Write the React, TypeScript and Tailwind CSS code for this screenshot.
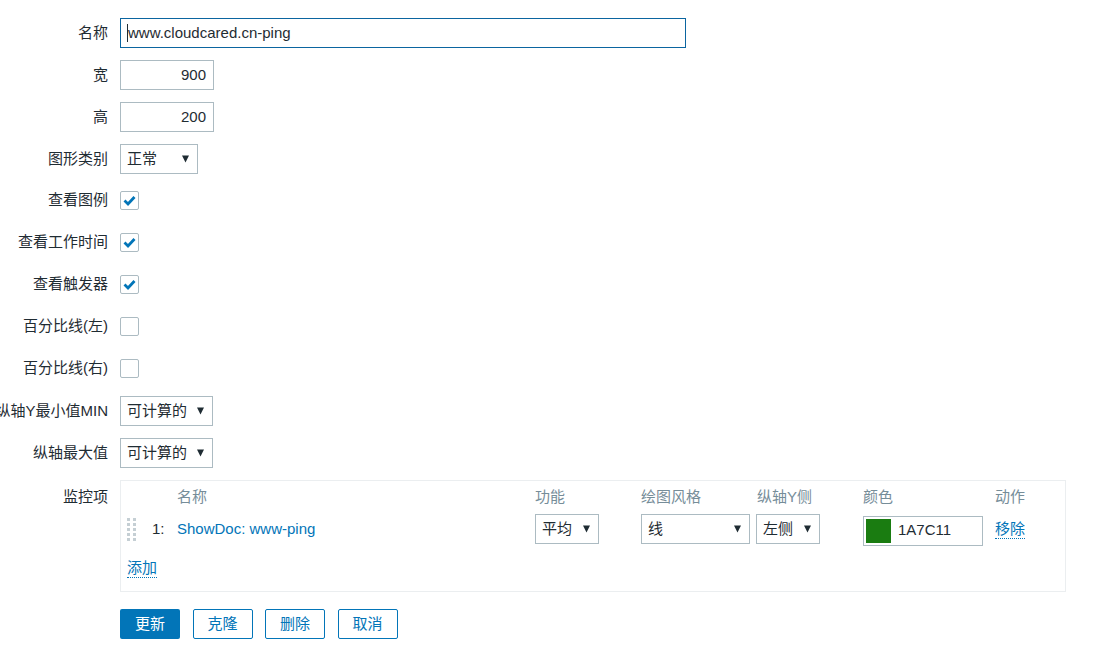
import React from 'react'

const font = { fontFamily: '"Liberation Sans", "Noto Sans CJK SC", sans-serif' }

function Label({ text }: { text: string }) {
  return (
    <div className="w-[108px] shrink-0 flex justify-end whitespace-nowrap text-[#1f2c33]">
      <span>{text}</span>
    </div>
  )
}

function Select({ value, width }: { value: string; width: string }) {
  return (
    <div
      className={`${width} h-[30px] border border-[#acbbc2] bg-white flex items-center justify-between pl-[6px] pr-[8px] text-[#1f2c33]`}
    >
      <span>{value}</span>
      <svg width="7" height="8" viewBox="0 0 7 8">
        <path d="M0 0.5 H7 L3.5 7.5 Z" fill="#1f2c33" />
      </svg>
    </div>
  )
}

function Check({ checked }: { checked: boolean }) {
  return (
    <div className="w-[19px] h-[19px] border border-[#acbbc2] rounded-[2px] bg-white flex items-center justify-center">
      {checked && (
        <svg width="13" height="11" viewBox="0 0 13 11">
          <path d="M1.5 5.5 L5 9 L11.5 2" fill="none" stroke="#0275b8" strokeWidth="2.8" />
        </svg>
      )}
    </div>
  )
}

function Row({ label, children }: { label: string; children: React.ReactNode }) {
  return (
    <div className="flex items-center h-[30px] gap-[12px]">
      <Label text={label} />
      {children}
    </div>
  )
}

function DragHandle() {
  const dots = []
  for (let r = 0; r < 5; r++) {
    for (let c = 0; c < 2; c++) {
      dots.push(<rect key={`${r}-${c}`} x={c * 6} y={r * 5} width="3" height="3" fill="#c5cfd4" />)
    }
  }
  return (
    <svg width="9" height="23" viewBox="0 0 9 23">
      {dots}
    </svg>
  )
}

export default function App() {
  return (
    <div className="w-[1106px] h-[657px] bg-white text-[15px] overflow-hidden" style={font}>
      <div className="pt-[18px] flex flex-col gap-[12px]">
        <Row label="名称">
          <div className="w-[566px] h-[30px] border border-[#0b65a0] flex items-center pl-[6px] text-[#1f2c33]">
            <span className="w-[1px] h-[18px] bg-[#1f2c33]"></span>
            www.cloudcared.cn-ping
          </div>
        </Row>
        <Row label="宽">
          <div className="w-[94px] h-[30px] border border-[#acbbc2] flex items-center justify-end pr-[7px] text-[#1f2c33]">900</div>
        </Row>
        <Row label="高">
          <div className="w-[94px] h-[30px] border border-[#acbbc2] flex items-center justify-end pr-[7px] text-[#1f2c33]">200</div>
        </Row>
        <Row label="图形类别">
          <Select value="正常" width="w-[78px]" />
        </Row>
        <div className="flex flex-col gap-[12px] -mt-[1px] mb-[1px]">
          <Row label="查看图例">
            <Check checked />
          </Row>
          <Row label="查看工作时间">
            <Check checked />
          </Row>
          <Row label="查看触发器">
            <Check checked />
          </Row>
          <Row label="百分比线(左)">
            <Check checked={false} />
          </Row>
          <Row label="百分比线(右)">
            <Check checked={false} />
          </Row>
        </div>
        <Row label="纵轴Y最小值MIN">
          <Select value="可计算的" width="w-[93px]" />
        </Row>
        <Row label="纵轴最大值">
          <Select value="可计算的" width="w-[93px]" />
        </Row>

        {/* 监控项 */}
        <div className="flex gap-[12px]">
          <div className="pt-[6px]">
            <Label text="监控项" />
          </div>
          <div className="w-[946px] h-[112px] border border-[#ebeef0] pl-[6px] pt-[6px]">
            <div className="flex items-center h-[20px] text-[#768d99]">
              <div className="w-[50px]"></div>
              <div className="w-[358px]">名称</div>
              <div className="w-[106px]">功能</div>
              <div className="w-[116px]">绘图风格</div>
              <div className="w-[106px]">纵轴Y侧</div>
              <div className="w-[132px]">颜色</div>
              <div>动作</div>
            </div>
            <div className="flex items-center h-[30px] mt-[7px]">
              <div className="w-[25px] flex items-center">
                <DragHandle />
              </div>
              <div className="w-[25px] text-[#1f2c33]">1:</div>
              <div className="w-[358px] text-[#0275b8]">ShowDoc: www-ping</div>
              <div className="w-[106px]">
                <Select value="平均" width="w-[64px]" />
              </div>
              <div className="w-[115px]">
                <Select value="线" width="w-[109px]" />
              </div>
              <div className="w-[107px]">
                <Select value="左侧" width="w-[64px]" />
              </div>
              <div className="w-[132px] pt-[3px]">
                <div className="w-[120px] h-[30px] border border-[#acbbc2] flex items-center pl-[2px] text-[#1f2c33]">
                  <div className="w-[25px] h-[24px] bg-[#1A7C11]"></div>
                  <span className="ml-[7px]">1A7C11</span>
                </div>
              </div>
              <div>
                <span className="text-[#0275b8] border-b border-dotted border-[#0275b8] pb-[1px]">移除</span>
              </div>
            </div>
            <div className="mt-[13px]">
              <span className="text-[#0275b8] border-b border-dotted border-[#0275b8] pb-[1px]">添加</span>
            </div>
          </div>
        </div>

        {/* buttons */}
        <div className="flex gap-[12.5px] pl-[120px] mt-[5px]">
          <div className="w-[60px] h-[30px] rounded-[2px] bg-[#0275b8] text-white flex items-center justify-center">更新</div>
          <div className="w-[60px] h-[30px] rounded-[2px] border border-[#0275b8] text-[#0275b8] flex items-center justify-center">克隆</div>
          <div className="w-[60px] h-[30px] rounded-[2px] border border-[#0275b8] text-[#0275b8] flex items-center justify-center">删除</div>
          <div className="w-[60px] h-[30px] rounded-[2px] border border-[#0275b8] text-[#0275b8] flex items-center justify-center">取消</div>
        </div>
      </div>
    </div>
  )
}
